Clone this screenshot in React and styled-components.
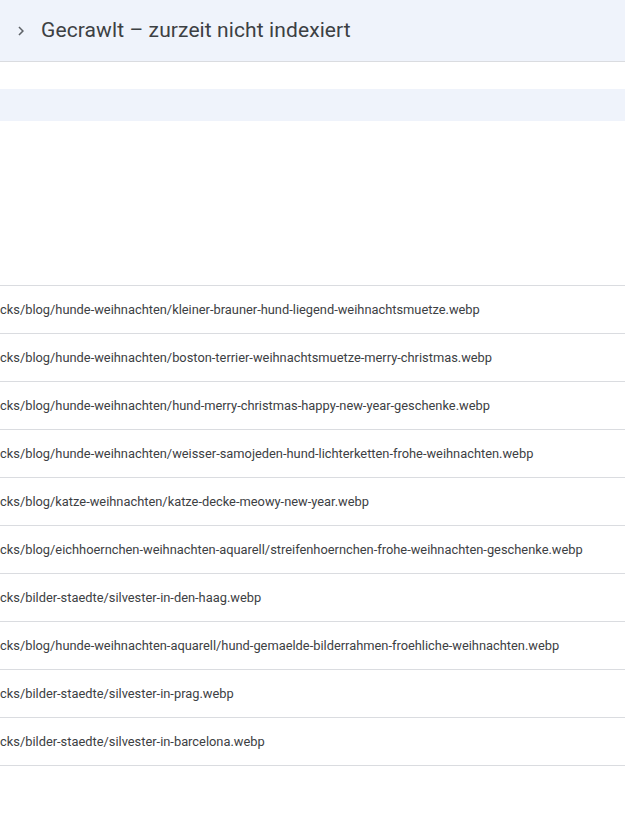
import React from "react";
import styled, { createGlobalStyle } from "styled-components";

const GlobalStyle = createGlobalStyle`
   html, body {
      margin: 0;
      padding: 0;
      background: #ffffff;
   }
   body {
      font-family: Roboto, "Noto Sans", Arial, sans-serif;
      overflow: hidden;
   }
`;

// STYLES
const Page = styled.div`
   width: 625px;
   height: 821px;
   overflow: hidden;
   display: flex;
   flex-direction: column;
`;

const Header = styled.div`
   height: 61px;
   background: #eff3fb;
   border-bottom: 1px solid #dadce0;
   display: flex;
   align-items: center;
   padding-left: 12px;
   gap: 11px;
   flex-shrink: 0;
`;

const Title = styled.h2`
   margin: 0 0 1px;
   font-family: Roboto, "Open Sans", sans-serif;
   font-weight: 400;
   font-size: 21px;
   color: #3c4043;
   letter-spacing: 0.1px;
`;

const Band = styled.div`
   margin-top: 27px;
   height: 32px;
   background: #eff3fb;
   flex-shrink: 0;
`;

const Table = styled.div`
   margin-top: 164px;
   border-top: 1px solid #dadce0;
   display: flex;
   flex-direction: column;
`;

const Row = styled.div`
   height: 47px;
   border-bottom: 1px solid #dadce0;
   display: flex;
   align-items: center;
   overflow: hidden;
   white-space: nowrap;
`;

const Url = styled.span`
   margin-left: ${(props) => props.offset}px;
   font-size: 12.85px;
   color: #3c4043;
`;

const rows = [
   "stocks/blog/hunde-weihnachten/kleiner-brauner-hund-liegend-weihnachtsmuetze.webp",
   "stocks/blog/hunde-weihnachten/boston-terrier-weihnachtsmuetze-merry-christmas.webp",
   "stocks/blog/hunde-weihnachten/hund-merry-christmas-happy-new-year-geschenke.webp",
   "stocks/blog/hunde-weihnachten/weisser-samojeden-hund-lichterketten-frohe-weihnachten.webp",
   "stocks/blog/katze-weihnachten/katze-decke-meowy-new-year.webp",
   "stocks/blog/eichhoernchen-weihnachten-aquarell/streifenhoernchen-frohe-weihnachten-geschenke.webp",
   "stocks/bilder-staedte/silvester-in-den-haag.webp",
   "stocks/blog/hunde-weihnachten-aquarell/hund-gemaelde-bilderrahmen-froehliche-weihnachten.webp",
   "stocks/bilder-staedte/silvester-in-prag.webp",
   "stocks/bilder-staedte/silvester-in-barcelona.webp",
];

const Chevron = () => (
   <svg width="18" height="18" viewBox="0 0 24 24" fill="#5f6368">
      <path d="M8.59 16.59 13.17 12 8.59 7.41 10 6l6 6-6 6z" />
   </svg>
);

const App = () => {
   return (
      <Page>
         <GlobalStyle />
         <Header>
            <Chevron />
            <Title>Gecrawlt – zurzeit nicht indexiert</Title>
         </Header>
         <Band />
         <Table>
            {rows.map((url) => (
               <Row key={url}>
                  <Url offset={-18}>{url}</Url>
               </Row>
            ))}
         </Table>
      </Page>
   );
};

export default App;
